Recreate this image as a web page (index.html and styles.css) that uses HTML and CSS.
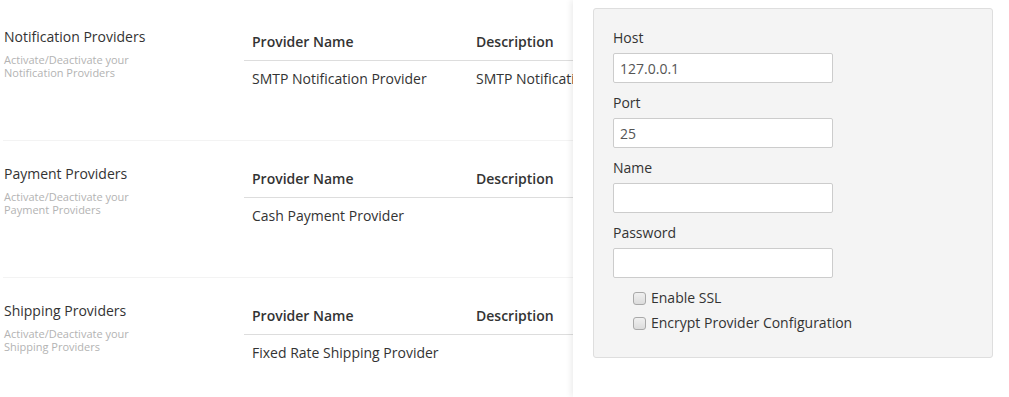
FILE: index.html
```html
<!DOCTYPE html>
<html lang="en">
<head>
  <meta charset="UTF-8" />
  <title>Providers</title>
  <link rel="stylesheet" href="styles.css">
</head>
<body>

  <div class="page">
    <div class="section">
      <div class="section-info">
        <h4>Notification Providers</h4>
        <p>Activate/Deactivate your Notification Providers</p>
      </div>
      <table class="providers">
        <thead>
          <tr><th class="col-name">Provider Name</th><th>Description</th></tr>
        </thead>
        <tbody>
          <tr><td>SMTP Notification Provider</td><td>SMTP Notification Provider</td></tr>
        </tbody>
      </table>
    </div>

    <div class="section">
      <div class="section-info">
        <h4>Payment Providers</h4>
        <p>Activate/Deactivate your Payment Providers</p>
      </div>
      <table class="providers">
        <thead>
          <tr><th class="col-name">Provider Name</th><th>Description</th></tr>
        </thead>
        <tbody>
          <tr><td>Cash Payment Provider</td><td></td></tr>
        </tbody>
      </table>
    </div>

    <div class="section">
      <div class="section-info">
        <h4>Shipping Providers</h4>
        <p>Activate/Deactivate your Shipping Providers</p>
      </div>
      <table class="providers">
        <thead>
          <tr><th class="col-name">Provider Name</th><th>Description</th></tr>
        </thead>
        <tbody>
          <tr><td>Fixed Rate Shipping Provider</td><td></td></tr>
        </tbody>
      </table>
    </div>
  </div>

  <div class="side-panel">
    <form class="config-box">
      <div class="form-group">
        <label class="field-label">Host</label>
        <input class="field" type="text" value="127.0.0.1">
      </div>
      <div class="form-group">
        <label class="field-label">Port</label>
        <input class="field" type="text" value="25">
      </div>
      <div class="form-group">
        <label class="field-label">Name</label>
        <input class="field" type="text">
      </div>
      <div class="form-group">
        <label class="field-label">Password</label>
        <input class="field" type="password">
      </div>
      <label class="check"><input type="checkbox"> Enable SSL</label>
      <label class="check"><input type="checkbox"> Encrypt Provider Configuration</label>
    </form>
  </div>

</body>
</html>
```

FILE: styles.css
```css
* {
  box-sizing: border-box;
  margin: 0;
  padding: 0;
}

body {
  font-family: 'Open Sans', sans-serif;
  font-size: 14px;
  line-height: 20px;
  color: #333;
  background: #fff;
  overflow: hidden;
  height: 100vh;
}

.page {
  padding: 3px 0 0 3px;
}

.section {
  display: flex;
  align-items: flex-start;
  height: 137px;
  padding-top: 20px;
  border-top: 1px solid #f3f3f3;
}

.section:first-child {
  border-top-color: transparent;
}

.section-info {
  width: 241px;
  padding: 3px 0 0 1px;
}

.section-info h4 {
  font-size: 14px;
  font-weight: 400;
  line-height: 20px;
  color: #333;
}

.section-info p {
  margin-top: 6px;
  font-size: 11px;
  line-height: 13px;
  color: #b3b3b3;
  width: 140px;
}

.providers {
  border-collapse: collapse;
  width: 700px;
  flex-shrink: 0;
}

.providers th {
  text-align: left;
  font-weight: 600;
  padding: 8px;
  border-bottom: 1px solid #ddd;
}

.providers th.col-name {
  width: 224px;
}

.providers td {
  padding: 8px;
  white-space: nowrap;
}

.side-panel {
  position: fixed;
  top: 0;
  right: 0;
  width: 436px;
  height: 100%;
  background: #fff;
  padding: 8px 16px 0 20px;
  box-shadow: -2px 0 6px rgba(0, 0, 0, 0.08);
}

.config-box {
  background: #f4f4f4;
  border: 1px solid #dedede;
  border-radius: 3px;
  padding: 19px 19px 0;
  height: 350px;
}

.form-group {
  height: 65px;
}

.field-label {
  display: block;
  height: 20px;
  margin-bottom: 5px;
  color: #333;
}

.field {
  display: block;
  width: 220px;
  height: 30px;
  padding: 0 6px;
  border: 1px solid #ccc;
  border-radius: 2px;
  background: #fff;
  font-family: 'Open Sans', sans-serif;
  font-size: 14px;
  color: #555;
  outline: none;
}

.check {
  display: flex;
  align-items: center;
  gap: 5px;
  height: 20px;
  margin-left: 20px;
  margin-bottom: 5px;
}

.check input {
  appearance: none;
  -webkit-appearance: none;
  width: 13px;
  height: 13px;
  border: 1px solid #a9a9a9;
  border-radius: 3px;
  background: linear-gradient(#f0f0f0, #dcdcdc);
}
```
